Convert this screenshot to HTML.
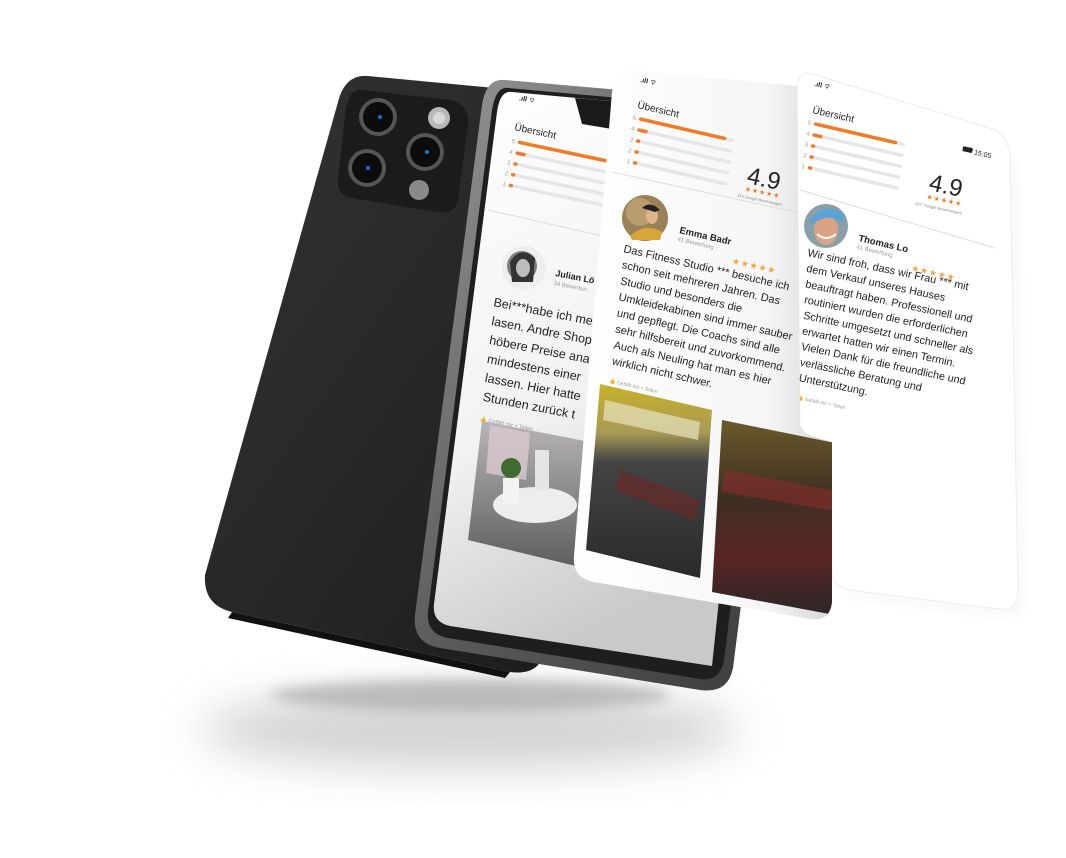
<!DOCTYPE html>
<html><head><meta charset="utf-8"><style>
html,body{margin:0;padding:0;background:#fff;width:1066px;height:858px;overflow:hidden}
svg{display:block}
text{font-family:"Liberation Sans","DejaVu Sans",sans-serif}
</style></head><body>
<svg width="1066" height="858" viewBox="0 0 1066 858" xmlns="http://www.w3.org/2000/svg">
<defs>
<filter id="b20" x="-50%" y="-50%" width="200%" height="200%"><feGaussianBlur stdDeviation="22"/></filter>
<filter id="b6" x="-50%" y="-50%" width="200%" height="200%"><feGaussianBlur stdDeviation="6"/></filter>
<linearGradient id="body" x1="0" y1="0" x2="1" y2="1"><stop offset="0" stop-color="#333"/><stop offset="0.6" stop-color="#252525"/><stop offset="1" stop-color="#1a1a1a"/></linearGradient>
<linearGradient id="frame" x1="0" y1="0" x2="1" y2="1"><stop offset="0" stop-color="#9a9a9a"/><stop offset="0.5" stop-color="#5a5a5a"/><stop offset="1" stop-color="#3a3a3a"/></linearGradient>
<linearGradient id="scr" x1="0" y1="0" x2="0.3" y2="1"><stop offset="0" stop-color="#fff"/><stop offset="0.6" stop-color="#f2f2f2"/><stop offset="1" stop-color="#c9c9c9"/></linearGradient>
<linearGradient id="c2" x1="0" y1="0" x2="1" y2="0"><stop offset="0" stop-color="#fff"/><stop offset="0.75" stop-color="#f6f6f6"/><stop offset="1" stop-color="#d6d6d6"/></linearGradient>
<linearGradient id="gym" x1="0" y1="0" x2="0" y2="1"><stop offset="0" stop-color="#c9b12a"/><stop offset="0.25" stop-color="#a89a55"/><stop offset="0.4" stop-color="#444"/><stop offset="1" stop-color="#2a2a2a"/></linearGradient>
<linearGradient id="gym2" x1="0" y1="0" x2="0" y2="1"><stop offset="0" stop-color="#6b5a2a"/><stop offset="0.4" stop-color="#3d2f22"/><stop offset="0.7" stop-color="#5a2424"/><stop offset="1" stop-color="#2a2626"/></linearGradient>
<linearGradient id="shop" x1="0" y1="0" x2="0" y2="1"><stop offset="0" stop-color="#b9b4b8"/><stop offset="0.5" stop-color="#8a8a8a"/><stop offset="1" stop-color="#5e5e5e"/></linearGradient>
<clipPath id="cp2"><path d="M632 70 L797 86 L800 420 Q800 432 812 436 L832 442 L832 602 Q830 622 810 619 L594 582 Q572 578 574 556 L612 92 Q616 68 632 70 Z"/></clipPath>
</defs>

<ellipse cx="470" cy="730" rx="270" ry="38" fill="#a5a5a5" opacity="0.5" filter="url(#b20)"/>
<ellipse cx="470" cy="695" rx="200" ry="16" fill="#888" opacity="0.45" filter="url(#b6)"/>

<!-- back phone -->
<path d="M368 76 L600 98 Q620 100 615 130 L545 650 Q540 676 510 672 L232 612 Q203 605 205 575 L338 102 Q345 74 368 76 Z" fill="url(#body)"/>
<path d="M232 612 L510 672 L505 678 L228 618 Z" fill="#111"/>
<path d="M362 90 L450 100 Q470 104 468 125 L458 200 Q455 215 438 212 L352 198 Q336 195 338 178 L346 108 Q350 88 362 90 Z" fill="#1b1b1b"/>
<circle cx="378" cy="117" r="19" fill="#555"/><circle cx="378" cy="117" r="15" fill="#0c0c0c"/><circle cx="380" cy="117" r="2" fill="#1d6fd0"/>
<circle cx="367" cy="168" r="19" fill="#555"/><circle cx="367" cy="168" r="15" fill="#0c0c0c"/><circle cx="368" cy="168" r="2" fill="#1d6fd0"/>
<circle cx="425" cy="152" r="19" fill="#555"/><circle cx="425" cy="152" r="15" fill="#0c0c0c"/><circle cx="427" cy="152" r="2" fill="#1d6fd0"/>
<circle cx="439" cy="118" r="11" fill="#b8b8b8"/><circle cx="439" cy="118" r="6" fill="#d8d8d8"/>
<circle cx="419" cy="190" r="10" fill="#8a8a8a"/>

<!-- front phone -->
<path d="M505 80 L780 104 Q805 108 800 140 L733 668 Q728 694 700 690 L440 648 Q412 643 415 615 L482 105 Q486 78 505 80 Z" fill="url(#frame)"/>
<path d="M508 88 L775 112 Q792 116 790 140 L724 660 Q720 682 700 679 L448 638 Q426 634 428 612 L492 110 Q496 86 508 88 Z" fill="#1e1e1e"/>
<path d="M512 92 L770 116 L712 666 L450 626 Q432 622 434 604 L497 112 Q500 90 512 92 Z" fill="url(#scr)"/>
<path d="M575 98 L620 102 L618 130 L582 124 Z" fill="#1a1a1a"/>
<g transform="translate(513,99) rotate(11)"><text x="6" y="0" font-size="7" font-weight="bold" fill="#222">.ıll ⌔</text></g>
<g transform="translate(514,130) rotate(12)">
<text x="0" y="0" font-size="10" fill="#222">Übersicht</text>
<g font-size="6" fill="#999"><text x="0" y="13">5</text><text x="0" y="24">4</text><text x="0" y="35">3</text><text x="0" y="46">2</text><text x="0" y="57">1</text></g>
<g stroke="#e6e6ea" stroke-width="3.5" stroke-linecap="round"><line x1="8" y1="11" x2="120" y2="11"/><line x1="8" y1="22" x2="120" y2="22"/><line x1="8" y1="33" x2="120" y2="33"/><line x1="8" y1="44" x2="120" y2="44"/><line x1="8" y1="55" x2="120" y2="55"/></g>
<g stroke="#f07b22" stroke-width="3.5" stroke-linecap="round"><line x1="8" y1="11" x2="110" y2="11"/><line x1="8" y1="22" x2="15" y2="22"/><line x1="8" y1="33" x2="9" y2="33"/><line x1="8" y1="44" x2="9" y2="44"/><line x1="8" y1="55" x2="9" y2="55"/></g>
</g>
<line x1="488" y1="210" x2="620" y2="240" stroke="#ddd" stroke-width="1"/>
<circle cx="524" cy="268" r="22" fill="#eee"/>
<circle cx="522" cy="266" r="15" fill="#7d7d7d"/>
<path d="M510 262 Q520 245 535 258 L533 282 L512 282 Z" fill="#333"/>
<ellipse cx="523" cy="268" rx="7" ry="9" fill="#bdbdbd"/>
<g transform="translate(555,276) rotate(11)">
<text x="0" y="0" font-size="9" font-weight="bold" fill="#222">Julian Lö</text>
<text x="0" y="9" font-size="6" fill="#999">34 Bewertun</text>
</g>
<g transform="translate(493,306) rotate(11)" font-size="12.5" fill="#222">
<text x="0" y="0">Bei***habe ich me</text>
<text x="1.5" y="19">lasen. Andre Shop</text>
<text x="3" y="38">höbere Preise ana</text>
<text x="4.5" y="57">mindestens einer</text>
<text x="6" y="76">lassen. Hier hatte</text>
<text x="7.5" y="95">Stunden zurück t</text>
<text x="9" y="115" font-size="5.5" fill="#999">👍 Gefällt mir      &lt; Teilen</text>
</g>
<path d="M482 421 L590 442 L580 567 L468 540 Z" fill="url(#shop)"/>
<path d="M490 425 L530 433 L526 480 L486 473 Z" fill="#d9c9cf" opacity="0.8"/>
<ellipse cx="535" cy="505" rx="42" ry="18" fill="#ededed"/>
<rect x="503" y="478" width="16" height="26" fill="#f3f3f3"/>
<circle cx="511" cy="468" r="10" fill="#3f6b2f"/>
<rect x="535" y="450" width="14" height="40" fill="#e5e5e5"/>

<!-- card 3 -->
<path d="M1012 160 L1020 595 Q1020 615 1000 612 L850 592" fill="none" stroke="#000" stroke-width="4" opacity="0.08" filter="url(#b6)"/>
<path d="M812 74 L990 128 Q1008 134 1010 155 L1018 590 Q1018 612 998 609 L850 590 Q832 587 832 570 L800 440 L797 92 Q797 70 812 74 Z" fill="#fff" stroke="#ececec" stroke-width="1"/>
<g transform="translate(814,86) rotate(12)"><text x="0" y="0" font-size="7" font-weight="bold" fill="#222">.ıll ⌔</text></g>
<g transform="translate(962,152) rotate(12)"><rect x="0" y="-6" width="10" height="5" rx="1" fill="#222"/><text x="12" y="0" font-size="7" fill="#222">15:05</text></g>
<g transform="translate(812,113) rotate(13)">
<text x="0" y="0" font-size="10" fill="#222">Übersicht</text>
<g font-size="6" fill="#999"><text x="-2" y="12">5</text><text x="-1" y="23">4</text><text x="0" y="34">3</text><text x="1" y="45">2</text><text x="2" y="56">1</text></g>
<g stroke="#e6e6ea" stroke-width="3.5" stroke-linecap="round"><line x1="6" y1="10" x2="96" y2="10"/><line x1="7" y1="21" x2="97" y2="21"/><line x1="8" y1="32" x2="98" y2="32"/><line x1="9" y1="43" x2="99" y2="43"/><line x1="10" y1="54" x2="100" y2="54"/></g>
<g stroke="#f07b22" stroke-width="3.5" stroke-linecap="round"><line x1="6" y1="10" x2="88" y2="10"/><line x1="7" y1="21" x2="14" y2="21"/><line x1="8" y1="32" x2="9" y2="32"/><line x1="9" y1="43" x2="10" y2="43"/><line x1="10" y1="54" x2="11" y2="54"/></g>
</g>
<g transform="translate(928,190) rotate(12)">
<text x="0" y="0" font-size="24" fill="#222">4.9</text>
<text x="0" y="9" font-size="7" fill="#f07b22" letter-spacing="1">★★★★★</text>
<text x="-10" y="17" font-size="4" fill="#888">(307 Google-Bewertungen)</text>
</g>
<line x1="800" y1="190" x2="995" y2="248" stroke="#ddd" stroke-width="1"/>
<circle cx="826" cy="226" r="22" fill="#8aa0a8"/>
<ellipse cx="826" cy="230" rx="12" ry="15" fill="#d9a384"/>
<path d="M810 220 Q825 200 845 215 L842 222 Q826 212 812 225 Z" fill="#5aa3d6"/>
<path d="M817 234 Q826 242 836 234" stroke="#fff" stroke-width="2" fill="none"/>
<g transform="translate(858,241) rotate(13)">
<text x="0" y="0" font-size="9.5" font-weight="bold" fill="#222">Thomas Lo</text>
<text x="0" y="8" font-size="6" fill="#999">41 Bewertung</text>
<text x="58" y="17" font-size="9" fill="#f5a53b" letter-spacing="1">★★★★★</text>
</g>
<g transform="translate(807,256) rotate(12)" font-size="10.8" fill="#222">
<text x="0" y="0">Wir sind froh, dass wir Frau *** mit</text>
<text x="2.2" y="15.5">dem Verkauf unseres Hauses</text>
<text x="4.4" y="31">beauftragt haben. Professionell und</text>
<text x="6.6" y="46.5">routiniert wurden die erforderlichen</text>
<text x="8.8" y="62">Schritte umgesetzt und schneller als</text>
<text x="11" y="77.5">erwartet hatten wir einen Termin.</text>
<text x="13.2" y="93">Vielen Dank für die freundliche und</text>
<text x="15.4" y="108.5">verlässliche Beratung und</text>
<text x="17.6" y="124">Unterstützung.</text>
<text x="20" y="142" font-size="5" fill="#999">👍 Gefällt mir        &lt; Teilen</text>
</g>

<!-- card 2 -->
<path d="M632 70 L797 86 L800 420 Q800 432 812 436 L832 442 L832 602 Q830 622 810 619 L594 582 Q572 578 574 556 L612 92 Q616 68 632 70 Z" fill="url(#c2)"/>
<g clip-path="url(#cp2)">
<g transform="translate(640,82) rotate(12)"><text x="0" y="0" font-size="7" font-weight="bold" fill="#222">.ıll ⌔</text></g>
<g transform="translate(637,108) rotate(13)">
<text x="0" y="0" font-size="10" fill="#222">Übersicht</text>
<g font-size="6" fill="#999"><text x="-2" y="12">5</text><text x="-1" y="23">4</text><text x="0" y="34">3</text><text x="1" y="45">2</text><text x="2" y="56">1</text></g>
<g stroke="#e6e6ea" stroke-width="3.5" stroke-linecap="round"><line x1="6" y1="10" x2="100" y2="10"/><line x1="7" y1="21" x2="101" y2="21"/><line x1="8" y1="32" x2="102" y2="32"/><line x1="9" y1="43" x2="103" y2="43"/><line x1="10" y1="54" x2="104" y2="54"/></g>
<g stroke="#f07b22" stroke-width="3.5" stroke-linecap="round"><line x1="6" y1="10" x2="92" y2="10"/><line x1="7" y1="21" x2="14" y2="21"/><line x1="8" y1="32" x2="9" y2="32"/><line x1="9" y1="43" x2="10" y2="43"/><line x1="10" y1="54" x2="11" y2="54"/></g>
</g>
<g transform="translate(746,183) rotate(12)">
<text x="0" y="0" font-size="24" fill="#222">4.9</text>
<text x="0" y="8" font-size="7" fill="#f07b22" letter-spacing="1">★★★★★</text>
<text x="-6" y="15" font-size="4" fill="#888">316 Google-Bewertungen</text>
</g>
<line x1="612" y1="172" x2="800" y2="213" stroke="#ddd" stroke-width="1"/>
<circle cx="645" cy="218" r="23" fill="#9b8256"/>
<circle cx="640" cy="212" r="14" fill="#b89d6f"/>
<path d="M630 236 Q645 222 662 232 L660 240 L632 240 Z" fill="#d7a53a"/>
<ellipse cx="652" cy="216" rx="6" ry="8" fill="#e0b48f"/>
<path d="M642 208 Q650 200 660 210 L655 212 Z" fill="#222"/>
<g transform="translate(679,233) rotate(13)">
<text x="0" y="0" font-size="9.5" font-weight="bold" fill="#222">Emma Badr</text>
<text x="0" y="8" font-size="6" fill="#999">41 Bewertung</text>
<text x="58" y="18" font-size="9" fill="#f5a53b" letter-spacing="1">★★★★★</text>
</g>
<g transform="translate(623,252) rotate(13)" font-size="11" fill="#222">
<text x="0" y="0">Das Fitness Studio *** besuche ich</text>
<text x="2" y="16">schon seit mehreren Jahren. Das</text>
<text x="4" y="32">Studio und besonders die</text>
<text x="6" y="48">Umkleidekabinen sind immer sauber</text>
<text x="8" y="64">und gepflegt. Die Coachs sind alle</text>
<text x="10" y="80">sehr hilfsbereit und zuvorkommend.</text>
<text x="12" y="96">Auch als Neuling hat man es hier</text>
<text x="14" y="112">wirklich nicht schwer.</text>
<text x="16" y="130" font-size="5" fill="#999">👍 Gefällt mir        &lt; Teilen</text>
</g>
<path d="M600 384 L712 410 L700 578 L586 550 Z" fill="url(#gym)"/>
<path d="M605 400 L700 422 L698 440 L603 420 Z" fill="#e8e2c0" opacity="0.7"/>
<path d="M620 470 L700 500 L695 520 L615 490 Z" fill="#6a2a2a" opacity="0.7"/>
<path d="M722 420 L840 444 L840 616 L712 592 Z" fill="url(#gym2)"/>
<path d="M725 470 L840 492 L840 512 L722 492 Z" fill="#8a2b2b" opacity="0.6"/>
</g>
</svg>
</body></html>
